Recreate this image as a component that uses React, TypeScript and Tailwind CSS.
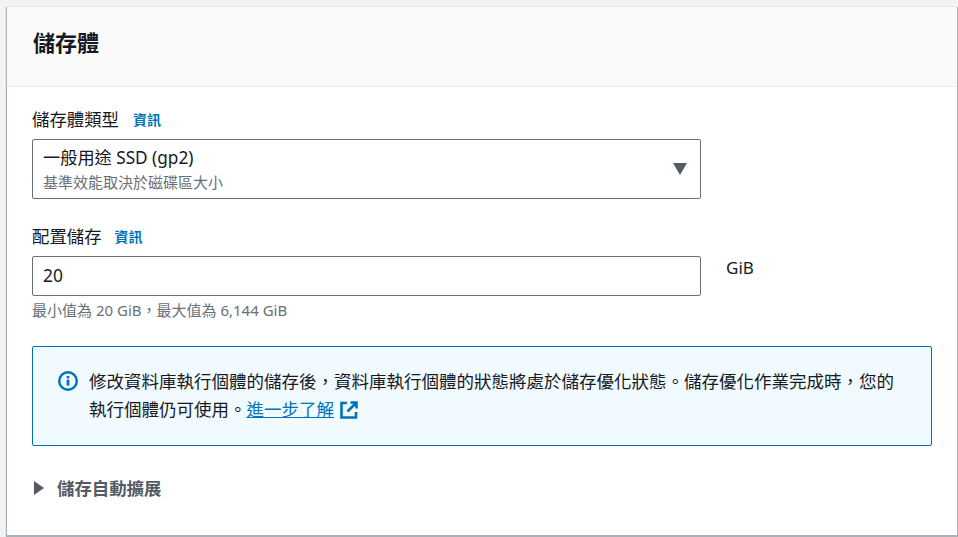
const font = "font-['Noto_Sans','Noto_Sans_CJK_TC',sans-serif]";

function InfoLink() {
  return <a className="text-[14px] font-bold leading-[20px] text-[#0073bb]">資訊</a>;
}

export default function App() {
  return (
    <div className={`${font} h-[537px] w-[958px] overflow-hidden bg-[#f2f3f3] pl-[7px] pt-[7px]`}>
      <div className="h-[528px] w-[950px] bg-white shadow-[0_1px_1px_1px_rgba(0,28,36,0.3)]">
        {/* Header */}
        <div className="flex h-[80px] items-center border-b border-[#eaeded] bg-[#fafafa] px-[26px] pb-[10px]">
          <h2 className="text-[22px] font-bold leading-[30px] text-[#16191f]">儲存體</h2>
        </div>

        <div className="w-[925px] pl-[25px] pt-[20px]">
          {/* Storage type */}
          <div className="flex h-[25px] items-center gap-[14px]">
            <span className="text-[17.4px] leading-[25px] text-[#16191f]">儲存體類型</span>
            <InfoLink />
          </div>
          <div className="mt-[7px] flex h-[60px] w-[669px] items-center justify-between rounded-[2px] border border-[#687078] pl-[10px] pr-[13px]">
            <div className="pt-[1px]">
              <div className="text-[17.2px] leading-[22px] text-[#16191f]">一般用途 SSD (gp2)</div>
              <div className="mt-[3px] text-[15px] leading-[21px] text-[#687078]">基準效能取決於磁碟區大小</div>
            </div>
            <svg width="14" height="12" viewBox="0 0 14 12" fill="#545b64">
              <path d="M0 0h14L7 12z" />
            </svg>
          </div>

          {/* Allocated storage */}
          <div className="mt-[25px] flex h-[25px] items-center gap-[13px]">
            <span className="text-[17.4px] leading-[25px] text-[#16191f]">配置儲存</span>
            <InfoLink />
          </div>
          <div className="mt-[7px] flex gap-[25px]">
            <div className="flex h-[40px] w-[669px] items-center rounded-[2px] border border-[#687078] pb-[1px] pl-[10px] text-[17.4px] text-[#16191f]">
              20
            </div>
            <span className="text-[17px] leading-[24px] text-[#16191f]">GiB</span>
          </div>
          <p className="mt-[4px] text-[15px] leading-[20px] text-[#687078]">最小值為 20 GiB，最大值為 6,144 GiB</p>

          {/* Info alert */}
          <div className="mt-[26px] flex h-[100px] w-[900px] gap-[11px] rounded-[2px] border border-[#0073bb] bg-[#f1faff] pl-[25px] pr-[30px] pt-[20px]">
            <svg className="mt-[4px] shrink-0" width="20" height="20" viewBox="0 0 20 20" fill="none">
              <circle cx="10" cy="10" r="8.8" stroke="#0073bb" strokeWidth="2.4" />
              <rect x="8.6" y="8.6" width="2.8" height="6" fill="#0073bb" />
              <rect x="8.6" y="5" width="2.8" height="2.4" fill="#0073bb" />
            </svg>
            <p className="text-[17.5px] leading-[28px] text-[#16191f]">
              修改資料庫執行個體的儲存後，資料庫執行個體的狀態將處於儲存優化狀態。儲存優化作業完成時，您的執行個體仍可使用。
              <a className="text-[#0073bb] underline">進一步了解</a>
              <svg className="ml-[6px] inline-block align-[-3px]" width="18" height="18" viewBox="0 0 18 18" fill="none" stroke="#0073bb" strokeWidth="2.6">
                <path d="M7 2H1.5v14.5H16V11" />
                <path d="M10.5 1.5H16.5V7.5M16.5 1.5L7.5 10.5" />
              </svg>
            </p>
          </div>

          {/* Expandable */}
          <div className="mt-[29px] flex items-center gap-[13px]">
            <svg className="ml-[2px]" width="10" height="14" viewBox="0 0 10 14" fill="#545b64">
              <path d="M0 0l10 7-10 7z" />
            </svg>
            <span className="text-[17.4px] font-bold leading-[26px] text-[#545b64]">儲存自動擴展</span>
          </div>
        </div>
      </div>
    </div>
  );
}
